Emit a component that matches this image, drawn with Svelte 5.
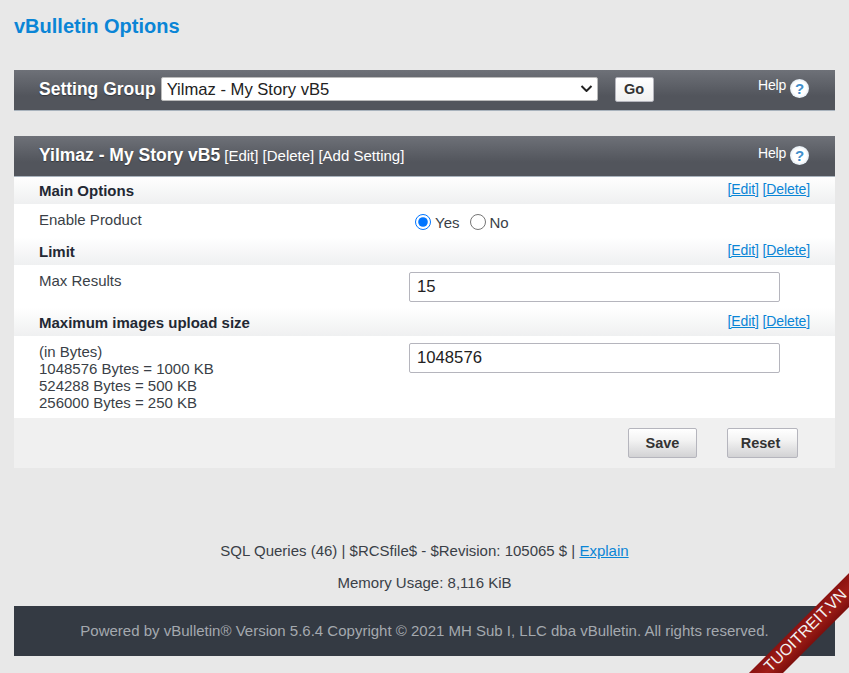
<script lang="ts">
type Row = {
	title: string;
	desc: string[];
	control: "radio" | "text";
	value?: string;
};

const rows: Row[] = [
	{ title: "Main Options", desc: ["Enable Product"], control: "radio" },
	{ title: "Limit", desc: ["Max Results"], control: "text", value: "15" },
	{
		title: "Maximum images upload size",
		desc: ["(in Bytes)", "1048576 Bytes = 1000 KB", "524288 Bytes = 500 KB", "256000 Bytes = 250 KB"],
		control: "text",
		value: "1048576"
	}
];
</script>

{#snippet help()}
	<div class="help">
		<span class="help-text">Help</span>
		<span class="help-icon">?</span>
	</div>
{/snippet}

<div class="page">
	<h1>vBulletin Options</h1>

	<form class="bar group-bar">
		<label class="bar-title" for="group">Setting Group</label>
		<div class="select-wrap">
			<select id="group">
				<option>Yilmaz - My Story vB5</option>
			</select>
			<svg class="chevron" width="13" height="7" viewBox="0 0 13 7" aria-hidden="true">
				<path d="M1.5 1l5 5 5-5" fill="none" stroke="#222" stroke-width="2" />
			</svg>
		</div>
		<button type="button" class="btn go">Go</button>
		{@render help()}
	</form>

	<section class="panel">
		<div class="bar">
			<span class="bar-title">Yilmaz - My Story vB5</span>
			<span class="bar-links">[Edit] [Delete] [Add Setting]</span>
			{@render help()}
		</div>

		{#each rows as row}
			<div class="row-head">
				<strong>{row.title}</strong>
				<span class="links">[<a href="#edit">Edit</a>] [<a href="#delete">Delete</a>]</span>
			</div>
			<div class="row" class:row-radio={row.control === "radio"}>
				<div class="desc">
					{#each row.desc as line}
						<div>{line}</div>
					{/each}
				</div>
				<div class="control">
					{#if row.control === "radio"}
						<label class="radio"><input type="radio" name="enable" checked /> Yes</label>
						<label class="radio"><input type="radio" name="enable" /> No</label>
					{:else}
						<input class="text" type="text" value={row.value} />
					{/if}
				</div>
			</div>
		{/each}

		<div class="actions">
			<button type="button" class="btn action">Save</button>
			<button type="button" class="btn action">Reset</button>
		</div>
	</section>

	<p class="info first">SQL Queries (46) | $RCSfile$ - $Revision: 105065 $ | <a href="#explain">Explain</a></p>
	<p class="info">Memory Usage: 8,116 KiB</p>

	<footer>Powered by vBulletin® Version 5.6.4 Copyright © 2021 MH Sub I, LLC dba vBulletin. All rights reserved.</footer>
</div>

<div class="ribbon"><span>TUOITREIT.VN</span></div>

<style>
:global(body) {
	background: #e8e8e8;
	font-family: "Liberation Sans", Arial, sans-serif;
	font-size: 15px;
	color: #3a3f47;
	overflow: hidden;
}
.page {
	padding: 0 14px;
	height: 673px;
	box-sizing: border-box;
}
h1 {
	margin: 0;
	padding-top: 14px;
	height: 70px;
	box-sizing: border-box;
	font-size: 20px;
	line-height: 24px;
	color: #0a85d6;
}
.bar {
	display: flex;
	align-items: center;
	height: 40px;
	padding: 0 25px 2px;
	box-sizing: border-box;
	background: linear-gradient(#6e7178, #52555c 65%);
	box-shadow: 0 1px 0 #a9b3bd;
	color: #fff;
	position: relative;
}
.bar-title {
	font-size: 17.5px;
	font-weight: bold;
	text-shadow: 0 1px 1px #33363c;
}
.bar-links {
	margin-left: 4px;
	margin-top: 1px;
	font-size: 15px;
}
.select-wrap {
	position: relative;
	margin-left: 5px;
	display: flex;
}
select {
	appearance: none;
	width: 437px;
	height: 24px;
	font: 16.6px "Liberation Sans", Arial, sans-serif;
	color: #222;
	background-color: #fff;
	border: 1px solid #bbb;
	border-radius: 2px;
	padding: 0 0 0 5px;
}
.chevron {
	position: absolute;
	right: 5px;
	top: 8px;
	pointer-events: none;
}
.btn {
	font-family: "Liberation Sans", Arial, sans-serif;
	font-weight: bold;
	font-size: 14.5px;
	color: #333;
	border: 1px solid #b5b5bd;
	border-radius: 2px;
	background: linear-gradient(#fff, #f3f3f3 40%, #d2d2d4);
	padding: 0;
}
.go {
	margin-left: 17px;
	width: 39px;
	height: 25px;
	background: linear-gradient(#fff, #f0f0f0);
}
.help {
	margin-left: auto;
	margin-right: 1px;
	display: flex;
	align-items: flex-start;
	gap: 4px;
}
.help-text {
	font-size: 14px;
	letter-spacing: -0.2px;
	line-height: 16px;
	margin-top: -3px;
}
.panel .help-text {
	margin-top: -1px;
}
.help-icon {
	width: 19px;
	height: 19px;
	border-radius: 50%;
	background: radial-gradient(circle at 50% 50%, #fff 50%, #dce8f2 75%, #a9bfd0);
	color: #3f8fcc;
	font-weight: bold;
	font-size: 15px;
	line-height: 19px;
	text-align: center;
}
.group-bar .help-icon {
	margin-top: -1px;
}
.panel {
	margin-top: 26px;
}
.row-head {
	display: flex;
	justify-content: space-between;
	align-items: flex-start;
	height: 28px;
	padding: 6px 25px 0;
	line-height: 17px;
	box-sizing: border-box;
	background: linear-gradient(#fff, #eff0f1);
	color: #232833;
}
.links {
	font-size: 14px;
	letter-spacing: -0.1px;
	margin-top: -1px;
	color: #0a85d6;
}
a {
	color: #0a85d6;
}
.row {
	display: flex;
	background: #fff;
	padding: 7px 25px 6px;
}
.row-radio {
	padding-bottom: 4px;
}
.desc {
	width: 370px;
	line-height: 17px;
	padding-bottom: 1px;
}
.control {
	display: flex;
	gap: 11px;
}
.radio {
	display: flex;
	align-items: center;
	gap: 4px;
	margin-left: 6px;
	height: 22px;
}
.radio + .radio {
	margin-left: 0;
	gap: 3px;
}
.radio input {
	margin: 0;
	width: 16px;
	height: 16px;
}
.text {
	width: 371px;
	height: 30px;
	box-sizing: border-box;
	border: 1px solid #b5b5bd;
	border-radius: 2px;
	padding: 0 7px;
	font: 16.7px "Liberation Sans", Arial, sans-serif;
	color: #222;
}
.actions {
	display: flex;
	justify-content: flex-end;
	gap: 30px;
	height: 50px;
	padding: 10px 37px 0 0;
	box-sizing: border-box;
	background: #f0f0f0;
}
.action {
	height: 30px;
	width: 69px;
}
.action + .action {
	width: 71px;
	padding-right: 4px;
}
.info {
	margin: 0;
	text-align: center;
	line-height: 17px;
	margin-top: 15px;
}
.info.first {
	margin-top: 74px;
}
footer {
	margin-top: 15px;
	height: 50px;
	line-height: 50px;
	background: #343a43;
	color: #a4a9af;
	text-align: center;
}
.ribbon {
	position: absolute;
	left: 727px;
	top: 620px;
	width: 160px;
	height: 24px;
	display: flex;
	justify-content: center;
	transform: rotate(-45deg);
	background: linear-gradient(#8a1210, #a01d18 50%, #7d0f0c);
	color: #f2f2f2;
	font-size: 16px;
	line-height: 19px;
}
</style>
